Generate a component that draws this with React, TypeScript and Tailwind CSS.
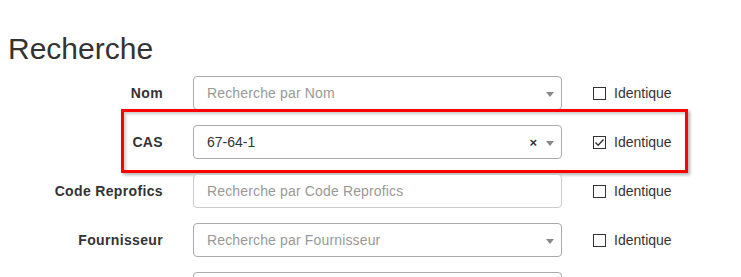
import React from "react";

const Caret = () => (
  <svg width="8" height="5" viewBox="0 0 8 5" className="absolute right-[7px] top-[15px]">
    <path d="M0 0 L8 0 L4 5 Z" fill="#888" />
  </svg>
);

const Check = ({ checked }: { checked?: boolean }) => (
  <div className="flex items-center ml-[31px]">
    <div className="w-[13px] h-[13px] border border-[#333] bg-white flex items-center justify-center">
      {checked && (
        <svg width="11" height="11" viewBox="0 0 11 11">
          <path d="M1.5 5.5 L4.2 8.2 L9.5 2.5" stroke="#333" strokeWidth="1.4" fill="none" />
        </svg>
      )}
    </div>
    <span className="ml-[8px] text-[14px] text-[#333]">Identique</span>
  </div>
);

type RowProps = {
  label: string;
  placeholder?: string;
  value?: string;
  select?: boolean;
  checked?: boolean;
  highlight?: boolean;
};

const Row = ({ label, placeholder, value, select, checked, highlight }: RowProps) => (
  <div className="relative flex items-center h-[34px] mb-[15px]">
    {highlight && (
      <div className="absolute left-[121px] top-[-16px] w-[567px] h-[64px] border-[3px] border-[#ff0000] shadow-[2px_2px_3px_rgba(0,0,0,0.3),inset_2px_2px_3px_rgba(0,0,0,0.2)] pointer-events-none" />
    )}
    <div className="w-[193px] pr-[30px] text-right font-bold text-[14px] tracking-[0.35px] text-[#333]">{label}</div>
    <div
      className={`relative w-[369px] h-[34px] rounded-[4px] bg-white border ${
        select ? "border-[#aaa]" : "border-[#ccc]"
      } flex items-center pl-[13px] text-[14px]`}
    >
      {value ? (
        <span className="text-[#333]">{value}</span>
      ) : (
        <span className="text-[#999] tracking-[0.15px]">{placeholder}</span>
      )}
      {value && (
        <span className="absolute right-[24px] top-[7px] text-[13px] font-bold text-[#333]">×</span>
      )}
      {select && <Caret />}
    </div>
    {label && <Check checked={checked} />}
  </div>
);

export default function App() {
  return (
    <div className="w-[741px] h-[277px] overflow-hidden bg-white font-['Liberation_Sans',Arial,sans-serif]">
      <h2 className="pt-[32px] pl-[8px] text-[30px] leading-[33px] text-[#333] font-normal">Recherche</h2>
      <div className="mt-[11px]">
        <Row label="Nom" placeholder="Recherche par Nom" select />
        <Row label="CAS" value="67-64-1" select checked highlight />
        <Row label="Code Reprofics" placeholder="Recherche par Code Reprofics" />
        <Row label="Fournisseur" placeholder="Recherche par Fournisseur" select />
        <Row label="" placeholder="" select />
      </div>
    </div>
  );
}
